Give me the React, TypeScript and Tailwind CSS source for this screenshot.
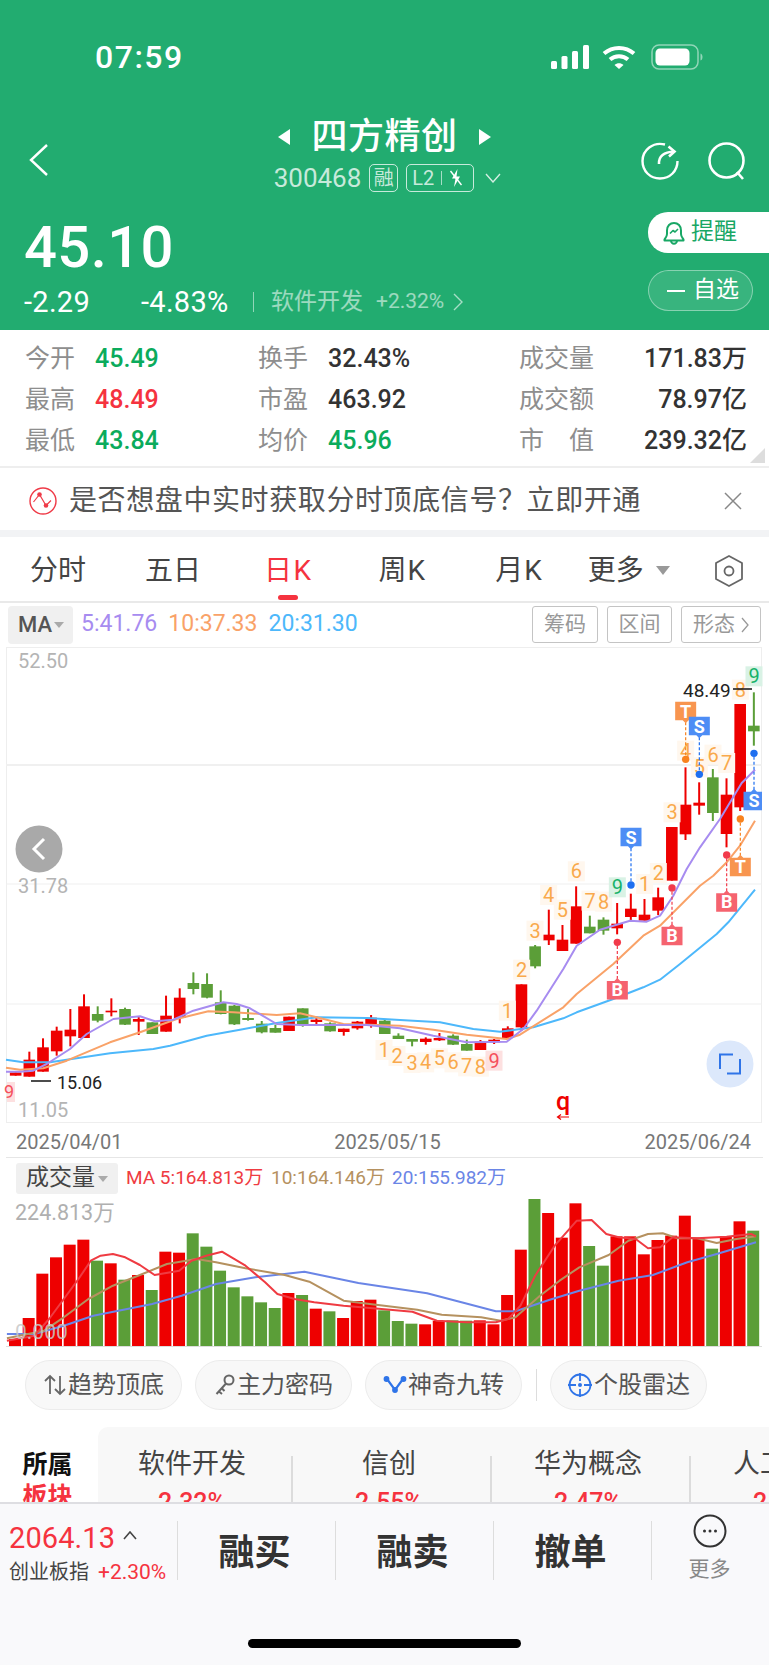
import type { ReactNode } from "react";

const RED = "#ee0000";
const GREEN = "#5b9e38";

// [bodyTop, bodyBottom, wickTop, wickBottom, up], measured on a 3x crop of the chart
type Candle = [number, number, number, number, 0 | 1];
const candles: Candle[] = [
  [1300, 1310, 1300, 1310, 1], [1262, 1313, 1238, 1313, 1], [1225, 1298, 1198, 1298, 1], [1175, 1237, 1163, 1250, 1],
  [1172, 1192, 1110, 1222, 1], [1102, 1197, 1066, 1197, 1], [1125, 1145, 1102, 1150, 0], [1115, 1120, 1078, 1132, 1],
  [1110, 1157, 1106, 1158, 0], [1140, 1148, 1132, 1188, 1], [1150, 1185, 1150, 1185, 0], [1130, 1178, 1070, 1178, 1],
  [1076, 1137, 1048, 1153, 1], [1032, 1050, 1000, 1066, 0], [1035, 1076, 1003, 1078, 0], [1090, 1125, 1054, 1126, 0],
  [1100, 1156, 1098, 1158, 0], [1137, 1143, 1110, 1145, 0], [1154, 1180, 1146, 1183, 0], [1167, 1181, 1157, 1181, 0],
  [1133, 1176, 1133, 1176, 1], [1108, 1158, 1108, 1163, 0], [1142, 1149, 1132, 1155, 1], [1153, 1177, 1150, 1178, 0],
  [1169, 1179, 1169, 1190, 1], [1148, 1168, 1146, 1172, 1], [1136, 1155, 1128, 1166, 1], [1145, 1185, 1140, 1185, 0],
  [1190, 1200, 1183, 1200, 0], [1200, 1208, 1200, 1222, 0], [1199, 1209, 1195, 1217, 1], [1197, 1204, 1182, 1206, 1],
  [1190, 1217, 1186, 1218, 0], [1215, 1235, 1202, 1235, 0], [1208, 1233, 1203, 1233, 1], [1202, 1210, 1200, 1215, 1],
  [1168, 1197, 1162, 1200, 1], [1036, 1165, 1036, 1175, 1], [922, 982, 918, 988, 0], [887, 904, 812, 918, 1],
  [902, 936, 858, 936, 1], [802, 914, 742, 914, 1], [863, 883, 830, 883, 0], [842, 875, 835, 887, 0],
  [854, 868, 792, 886, 1], [809, 834, 764, 844, 1], [827, 845, 780, 845, 1], [775, 815, 746, 828, 1],
  [564, 725, 564, 725, 1], [497, 586, 385, 603, 1], [491, 500, 430, 527, 1], [415, 522, 390, 546, 0],
  [467, 585, 418, 625, 1], [195, 505, 195, 516, 1], [260, 277, 160, 320, 0],
];

const pts = (left: number[][], right: number[][]) =>
  [
    ...left.map(([u, v]) => `${(u / 3).toFixed(1)},${(640 + v / 3).toFixed(1)}`),
    ...right.map(([u, v]) => `${(400 + u / 3).toFixed(1)},${(640 + v / 3).toFixed(1)}`),
  ].join(" ");

const ma5 = pts(
  [[18, 1298], [60, 1298], [100, 1295], [140, 1275], [210, 1230], [260, 1185], [340, 1140], [420, 1132], [465, 1147], [520, 1142], [580, 1115], [670, 1090], [710, 1095], [750, 1108], [830, 1155], [900, 1158], [1000, 1158], [1100, 1158]],
  [[0, 1168], [100, 1190], [200, 1210], [320, 1208], [370, 1170], [410, 1115], [490, 990], [530, 920], [600, 872], [690, 845], [740, 848], [780, 830], [820, 770], [860, 690], [900, 625], [960, 540], [1025, 432], [1065, 392]]
);
const ma10 = pts(
  [[18, 1286], [60, 1292], [130, 1288], [200, 1265], [330, 1210], [420, 1180], [530, 1140], [625, 1117], [700, 1120], [830, 1128], [900, 1123], [950, 1135], [1030, 1155]],
  [[0, 1160], [100, 1172], [200, 1187], [320, 1200], [360, 1187], [490, 1105], [530, 1065], [640, 975], [730, 890], [780, 860], [840, 800], [900, 740], [940, 710], [980, 670], [1020, 620], [1065, 545]]
);
const ma20 = pts(
  [[18, 1262], [70, 1270], [150, 1270], [330, 1243], [460, 1230], [510, 1220], [620, 1190], [720, 1172], [830, 1152], [950, 1135], [1100, 1137]],
  [[0, 1143], [120, 1150], [220, 1170], [300, 1178], [400, 1165], [490, 1138], [530, 1120], [640, 1080], [730, 1045], [780, 1022], [840, 975], [950, 885], [985, 850], [1065, 752]]
);

// [x, y, digit, tone], already in page pixels
const counts: [number, number, string, "o" | "g" | "r"][] = [
  [384, 1051, "1", "o"], [397, 1057, "2", "o"],
  ...([
    [36, 1272, "3", "o"], [77, 1270, "4", "o"], [118, 1258, "5", "o"], [159, 1270, "6", "o"], [200, 1282, "7", "o"], [241, 1283, "8", "o"], [282, 1265, "9", "r"],
    [322, 1115, "1", "o"], [365, 992, "2", "o"], [405, 875, "3", "o"], [446, 768, "4", "o"], [487, 812, "5", "o"], [529, 697, "6", "o"], [570, 785, "7", "o"], [611, 788, "8", "o"], [652, 745, "9", "g"],
    [734, 735, "1", "o"], [775, 702, "2", "o"], [816, 520, "3", "o"], [857, 335, "4", "o"], [898, 385, "5", "o"], [939, 347, "6", "o"], [980, 372, "7", "o"], [1021, 152, "8", "o"], [1062, 112, "9", "g"],
  ] as [number, number, string, "o" | "g" | "r"][]).map(
    ([u, v, d, t]) => [400 + u / 3, 640 + v / 3, d, t] as [number, number, string, "o" | "g" | "r"]
  ),
];

// [u, v of tag centre, v of dot, letter]
const tags: [number, number, number, string][] = [
  [693, 598, 738, "S"], [652, 1050, 910, "B"], [816, 887, 747, "B"], [980, 787, 648, "B"],
  [857, 220, 361, "T"], [898, 265, 406, "S"], [1021, 680, 540, "T"], [1062, 482, 343, "S"],
];
const tagColor: Record<string, string> = { S: "#4d8df5", B: "#f5636f", T: "#f8954f" };
const dotColor: Record<string, string> = { S: "#1e6ff0", B: "#f23a4a", T: "#f8821e" };

function PriceChart() {
  return (
    <svg width="769" height="477" viewBox="0 648 769 477" className="block" fontFamily="Roboto, sans-serif">
      <rect x="6.5" y="648.5" width="755" height="475" fill="none" stroke="#eeeeee" />
      <line x1="6" x2="762" y1="766" y2="766" stroke="#f0f0f0" strokeWidth="2" />
      <line x1="6" x2="762" y1="885" y2="885" stroke="#efefef" />
      <line x1="6" x2="762" y1="1005" y2="1005" stroke="#efefef" />

      <text x="18" y="669" fontSize="20" fill="#b4b4b4">52.50</text>
      <text x="18" y="894" fontSize="20" fill="#b4b4b4">31.78</text>
      <text x="18" y="1118" fontSize="20" fill="#b4b4b4">11.05</text>

      {candles.map(([top, bottom, wickTop, wickBottom, up], i) => {
        const x = 15.67 + 13.67 * i;
        const color = up ? RED : GREEN;
        return (
          <g key={i}>
            <rect x={x - 1} y={640 + wickTop / 3} width="2" height={(wickBottom - wickTop) / 3} fill={color} />
            <rect x={x - 5.8} y={640 + top / 3} width="11.6" height={(bottom - top) / 3} fill={color} />
          </g>
        );
      })}

      <polyline points={ma20} fill="none" stroke="#4db8fb" strokeWidth="2" strokeLinejoin="round" />
      <polyline points={ma10} fill="none" stroke="#f9a268" strokeWidth="2" strokeLinejoin="round" />
      <polyline points={ma5} fill="none" stroke="#a78cf0" strokeWidth="2" strokeLinejoin="round" />

      <rect x="7" y="1083" width="8" height="20" fill="#fde0e0" />
      <text x="4" y="1099" fontSize="18" fill="#f5505c">9</text>

      {counts.map(([x, y, digit, tone], i) => {
        const bg = tone === "o" ? "#fff7ee" : tone === "g" ? "#d9f2e5" : "#fde0e0";
        const fg = tone === "o" ? "#f9a94b" : tone === "g" ? "#17b26a" : "#f5505c";
        return (
          <g key={i}>
            <rect x={x - 8.5} y={y - 10} width="17" height="20" fill={bg} />
            <text x={x} y={y + 7} fontSize="20" textAnchor="middle" fill={fg}>{digit}</text>
          </g>
        );
      })}

      {tags.map(([u, v, dot, letter], i) => {
        const x = 400 + u / 3;
        const y = 640 + v / 3;
        const dy = 640 + dot / 3;
        const down = dy > y;
        const color = tagColor[letter];
        const left = x - 10.5;
        const right = Math.min(x + 10.5, 762);
        return (
          <g key={i}>
            <line x1={x} x2={x} y1={y} y2={dy} stroke={dotColor[letter]} strokeWidth="1.2" strokeDasharray="3 2" />
            <circle cx={x} cy={dy} r="3.7" fill={dotColor[letter]} />
            {down ? (
              <polygon points={`${left},${y - 10.5} ${right},${y - 10.5} ${right},${y + 8} ${x + 3},${y + 8} ${x},${y + 11} ${x - 3},${y + 8} ${left},${y + 8}`} fill={color} />
            ) : (
              <polygon points={`${left},${y - 8} ${x - 3},${y - 8} ${x},${y - 11} ${x + 3},${y - 8} ${right},${y - 8} ${right},${y + 10.5} ${left},${y + 10.5}`} fill={color} />
            )}
            <text x={x} y={y + (down ? 5.5 : 7)} fontSize="18" fontWeight="700" textAnchor="middle" fill="#ffffff">{letter}</text>
          </g>
        );
      })}

      <text x="683" y="698" fontSize="19" fill="#222222">48.49</text>
      <line x1="733" x2="752" y1="690" y2="690" stroke="#111111" strokeWidth="1.5" />
      <text x="57" y="1090" fontSize="18" fill="#222222">15.06</text>
      <line x1="31" x2="51" y1="1082" y2="1082" stroke="#111111" strokeWidth="1.5" />

      <text x="563" y="1111" fontSize="25" fontWeight="500" textAnchor="middle" fill={RED}>q</text>
      <path d="M569 1118H558M561 1115.5L557.5 1118L561 1120.5" fill="none" stroke={RED} strokeWidth="1.2" />

      <circle cx="39" cy="850" r="23.5" fill="#a9a9a9" />
      <path d="M44 840L34 850L44 860" fill="none" stroke="#ffffff" strokeWidth="3" />

      <circle cx="730" cy="1065" r="23.5" fill="#dce8fb" />
      <path d="M720 1070V1055.5H733M740 1060V1074.500H727" fill="none" stroke="#2f74e8" strokeWidth="2" />
    </svg>
  );
}

// volume bars: [v of top, up]
const volumes: [number, 0 | 1][] = [
  [570, 1], [507, 1], [374, 1], [325, 1], [287, 1], [272, 1], [335, 0], [343, 1], [392, 0], [378, 1], [423, 0],
  [308, 1], [311, 1], [253, 0], [293, 0], [365, 0], [415, 0], [442, 0], [460, 0], [477, 0], [432, 1], [438, 0],
  [479, 1], [487, 0], [507, 1], [456, 1], [452, 1], [484, 0], [516, 0], [524, 0], [526, 1], [516, 1], [514, 0],
  [515, 0], [514, 1], [526, 1], [438, 1], [302, 1], [140, 0], [192, 1], [266, 1], [163, 1], [291, 0], [350, 0],
  [262, 1], [262, 1], [316, 1], [273, 1], [260, 1], [200, 1], [266, 1], [299, 0], [262, 1], [217, 1], [245, 0],
];

const volPts = (p: number[][]) => p.map(([u, v]) => `${(u / 2.037).toFixed(1)},${(1150 + v / 3).toFixed(1)}`).join(" ");

const volMa5 = volPts([[14, 575], [70, 560], [100, 510], [130, 450], [160, 390], [185, 335], [205, 320], [230, 315], [255, 325], [285, 348], [315, 378], [365, 365], [390, 335], [420, 320], [452, 308], [500, 350], [540, 400], [565, 435], [600, 450], [640, 460], [700, 470], [760, 478], [840, 488], [890, 515], [950, 520], [1010, 520], [1035, 510], [1060, 470], [1090, 380], [1130, 290], [1175, 215], [1205, 213], [1235, 255], [1260, 265], [1295, 270], [1320, 298], [1345, 295], [1370, 265], [1420, 268], [1480, 263], [1530, 255], [1540, 262]]);
const volMa10 = volPts([[14, 568], [90, 545], [130, 505], [180, 450], [230, 410], [290, 375], [340, 345], [400, 330], [440, 340], [500, 358], [580, 378], [630, 398], [700, 455], [770, 468], [850, 482], [900, 497], [980, 505], [1020, 515], [1050, 505], [1100, 440], [1140, 395], [1180, 355], [1240, 318], [1280, 275], [1320, 255], [1350, 253], [1380, 268], [1420, 268], [1460, 282], [1500, 270], [1540, 262]]);
const volMa20 = volPts([[14, 555], [70, 555], [130, 530], [190, 500], [310, 465], [370, 440], [440, 405], [520, 385], [620, 368], [730, 402], [870, 433], [940, 460], [1010, 487], [1050, 487], [1120, 452], [1180, 425], [1260, 395], [1330, 378], [1400, 340], [1460, 315], [1540, 280]]);

function VolumeChart() {
  return (
    <svg width="769" height="148" viewBox="0 1200 769 148" className="block" fontFamily="Roboto, 'Noto Sans CJK SC', sans-serif">
      <line x1="6" x2="762" y1="1347.500" y2="1347.500" stroke="#dddddd" />
      {volumes.map(([top, up], i) => (
        <rect key={i} x={9 + 13.67 * i} y={1150 + top / 3} width="12" height={1347 - (1150 + top / 3)} fill={up ? RED : GREEN} />
      ))}
      <polyline points={volMa20} fill="none" stroke="#6a85e6" strokeWidth="2" strokeLinejoin="round" />
      <polyline points={volMa10} fill="none" stroke="#b5915f" strokeWidth="2" strokeLinejoin="round" />
      <polyline points={volMa5} fill="none" stroke="#ef3b42" strokeWidth="2" strokeLinejoin="round" />
      <text x="15" y="1221" fontSize="21.500" fill="#b0b0b0">224.813万</text>
      <text x="15" y="1340" fontSize="21" fill="#c8c8c8" fillOpacity="0.85">0.000</text>
    </svg>
  );
}

function Signal() {
  return (
    <svg width="38" height="24" viewBox="0 0 38 24" fill="#ffffff">
      <rect x="0" y="16" width="6" height="8" rx="1.5" />
      <rect x="10.500" y="11" width="6" height="13" rx="1.5" />
      <rect x="21" y="6" width="6" height="18" rx="1.5" />
      <rect x="32" y="0" width="6" height="24" rx="1.5" />
    </svg>
  );
}

function Wifi() {
  return (
    <svg width="34" height="24" viewBox="0 0 34 24" fill="none" stroke="#ffffff" strokeWidth="4">
      <path d="M2 8.500C10.500 1 23.500 1 32 8.500" />
      <path d="M8 14.500C13 10 21 10 26 14.500" />
      <path d="M12.500 20L17 24L21.500 20C19 17.500 15 17.500 12.500 20Z" fill="#ffffff" stroke="none" />
    </svg>
  );
}

function Battery() {
  return (
    <svg width="52" height="26" viewBox="0 0 52 26">
      <rect x="1" y="1" width="46" height="24" rx="7" fill="none" stroke="#ffffff" strokeOpacity="0.5" strokeWidth="1.5" />
      <rect x="4.500" y="4.500" width="34" height="17" rx="4.500" fill="#ffffff" />
      <path d="M49.500 9.500C51 10 51.500 11.500 51.500 13C51.500 14.500 51 16 49.500 16.500Z" fill="#ffffff" fillOpacity="0.5" />
    </svg>
  );
}

function Bell() {
  return (
    <svg width="22" height="24" viewBox="0 0 22 24" fill="none" stroke="#18a765" strokeWidth="2" strokeLinejoin="round">
      <path d="M4 13V9.500C4 5 7 2 11 2C15 2 18 5 18 9.500V13C18 15.500 19.500 17 20.500 18.500V19.500H1.500V18.500C2.500 17 4 15.500 4 13Z" />
      <path d="M8 19.500C8 21.500 9.500 22.800 11 22.800C12.500 22.800 14 21.500 14 19.500" />
      <path d="M7 12.500L10 9.500L12 11L15 8" strokeWidth="1.6" />
    </svg>
  );
}

function Pill({ icon, label }: { icon: ReactNode; label: string }) {
  return (
    <div className="flex h-[50px] w-[157px] items-center justify-center gap-[1px] rounded-full border border-[#ececec] bg-[#f8f8f8] text-[24px] text-[#555555]">
      {icon}
      <span>{label}</span>
    </div>
  );
}

function Stat({ label, value, color, wide }: { label: ReactNode; value: string; color: string; wide?: boolean }) {
  return (
    <div className={wide ? "flex h-[41px] items-center justify-between" : "flex h-[41px] items-center gap-[20px]"}>
      <span className={wide ? "flex w-[75px] justify-between text-[25px] text-[#8e8e8e]" : "text-[25px] text-[#8e8e8e]"}>{label}</span>
      <span className={`text-[25px] font-medium ${color}`}>{value}</span>
    </div>
  );
}

function Theme({ name, value, width }: { name: string; value: string; width: string }) {
  return (
    <div className={`flex shrink-0 flex-col items-center pr-[5px] ${width}`}>
      <span className="text-[27px] leading-[34px] text-[#444444]">{name}</span>
      <span className="mt-[7px] text-[25px] font-medium leading-[30px] text-[#f5333f]">{value}</span>
    </div>
  );
}

export default function App() {
  return (
    <div className="flex h-[1665px] w-[769px] flex-col overflow-hidden bg-white font-['Roboto','Noto_Sans_CJK_SC',sans-serif]">
      <header className="h-[330px] shrink-0 bg-[#22ac70] text-white">
        <div className="flex h-[110px] items-start justify-between pl-[95px] pr-[66px] pt-[37px]">
          <span className="text-[32px] font-medium leading-[40px] tracking-[1.5px]">07:59</span>
          <div className="flex items-center gap-[15px] pt-[7px]">
            <div className="-mr-[2px]">
              <Signal />
            </div>
            <Wifi />
            <Battery />
          </div>
        </div>

        <div className="flex h-[96px] items-start">
          <div className="flex-1 pl-[29px] pt-[34px]">
            <svg width="20" height="32" viewBox="0 0 20 32" fill="none" stroke="#ffffff" strokeWidth="2.4">
              <path d="M18 1L2 16L18 31" />
            </svg>
          </div>
          <div className="flex flex-col items-center">
            <div className="flex h-[54px] items-center gap-[21px] pr-[6px]">
              <span className="h-0 w-0 border-y-[8px] border-r-[12px] border-y-transparent border-r-white" />
              <span className="text-[36px] font-medium leading-[46px] tracking-[0.5px]">四方精创</span>
              <span className="h-0 w-0 border-y-[8px] border-l-[12px] border-y-transparent border-l-white" />
            </div>
            <div className="flex h-[28px] items-center text-white/75">
              <span className="text-[26px]">300468</span>
              <span className="ml-[8px] flex h-[28px] w-[29px] items-center justify-center rounded-[5px] border border-white/75 text-[20px]">融</span>
              <span className="ml-[8px] flex h-[28px] w-[68px] items-center rounded-[5px] border border-white/75 pl-[5px] text-[20px]">
                L2
                <span className="mx-[7px] h-[14px] w-px bg-white/60" />
                <svg width="14" height="20" viewBox="0 0 14 20" fill="#ffffff">
                  <path d="M8.500 1L3 10.500H6.500L5 19L11 8.500H7.500Z" />
                  <path d="M1.500 3L12.500 17" stroke="#ffffff" strokeWidth="1.4" fill="none" />
                </svg>
              </span>
              <svg className="ml-[11px]" width="16" height="10" viewBox="0 0 16 10" fill="none" stroke="#ffffff" strokeOpacity="0.8" strokeWidth="1.4">
                <path d="M1 1L8 9L15 1" />
              </svg>
            </div>
          </div>
          <div className="flex flex-1 justify-end gap-[29px] pr-[23px] pt-[32px]">
            <svg width="38" height="38" viewBox="0 0 38 38" fill="none" stroke="#ffffff" strokeWidth="2.4">
              <path d="M24 2.500C12 -0.500 1.500 8 1.500 19C1.500 29 9 36.500 19 36.500C29 36.500 36.500 29 36.500 19" />
              <path d="M18 22C17.500 14 23 10 33 9.500" strokeWidth="2.6" />
              <path d="M27.500 4.500L33.500 9.500L28 14.500" strokeWidth="2.6" />
            </svg>
            <svg width="38" height="39" viewBox="0 0 38 39" fill="none" stroke="#ffffff" strokeWidth="2.6">
              <circle cx="18.500" cy="18.500" r="17" />
              <path d="M29 30L35 37" />
            </svg>
          </div>
        </div>

        <div className="flex items-start justify-between pl-[24px] pt-[6px]">
          <div className="flex flex-col">
            <span className="text-[58px] font-medium leading-[70px] tracking-[0.4px]">45.10</span>
            <div className="mt-[3px] flex h-[34px] items-center">
              <span className="w-[117px] text-[29px] leading-[34px] tracking-[0.3px]">-2.29</span>
              <span className="w-[112px] text-[29px] leading-[34px] tracking-[0.3px]">-4.83%</span>
              <span className="h-[20px] w-px bg-white/50" />
              <span className="ml-[17px] text-[23px] text-white/55">软件开发</span>
              <span className="ml-[13px] text-[21px] text-white/55">+2.32%</span>
              <svg className="ml-[9px]" width="10" height="18" viewBox="0 0 10 18" fill="none" stroke="#ffffff" strokeOpacity="0.6" strokeWidth="1.4">
                <path d="M1 1L9 9L1 17" />
              </svg>
            </div>
          </div>
          <div className="flex w-[121px] flex-col gap-[17px]">
            <div className="flex h-[41px] items-center gap-[6px] rounded-l-[20px] bg-white pl-[15px] text-[23px] text-[#18a765]">
              <Bell />
              <span>提醒</span>
            </div>
            <div className="flex h-[41px] w-[105px] items-center rounded-full border border-white/40 bg-white/10 pl-[18px] text-[23px]">
              <span className="mr-[8px] h-[2px] w-[18px] bg-white" />
              <span>自选</span>
            </div>
          </div>
        </div>
      </header>

      <section className="relative grid h-[138px] shrink-0 grid-cols-[233px_261px_1fr] border-b-2 border-[#eeeeee] pl-[25px] pr-[22px] pt-[8px]">
        <div>
          <Stat label="今开" value="45.49" color="text-[#0bab5c]" />
          <Stat label="最高" value="48.49" color="text-[#f5333f]" />
          <Stat label="最低" value="43.84" color="text-[#0bab5c]" />
        </div>
        <div>
          <Stat label="换手" value="32.43%" color="text-[#333333]" />
          <Stat label="市盈" value="463.92" color="text-[#333333]" />
          <Stat label="均价" value="45.96" color="text-[#0bab5c]" />
        </div>
        <div>
          <Stat wide label="成交量" value="171.83万" color="text-[#333333]" />
          <Stat wide label="成交额" value="78.97亿" color="text-[#333333]" />
          <Stat wide label={<><span>市</span><span>值</span></>} value="239.32亿" color="text-[#333333]" />
        </div>
        <span className="absolute bottom-[3px] right-[4px] h-0 w-0 border-b-[15px] border-l-[15px] border-b-[#dddddd] border-l-transparent" />
      </section>

      <div className="flex h-[62px] shrink-0 items-center pl-[29px] pr-[27px] pt-[3px]">
        <svg width="28" height="28" viewBox="0 0 28 28" fill="none" stroke="#ef3b48" strokeWidth="1.4">
          <circle cx="14" cy="14" r="13" />
          <path d="M4.500 15L10.500 7.500L17 18.500L22 13.500" strokeWidth="1.2" />
          <circle cx="10.500" cy="7.500" r="2.300" fill="#ef3b48" stroke="none" />
          <circle cx="17" cy="18.500" r="2.300" fill="#ef3b48" stroke="none" />
        </svg>
        <span className="ml-[12px] flex-1 text-[28px] leading-[36px] tracking-[0.6px] text-[#555555]">是否想盘中实时获取分时顶底信号？立即开通</span>
        <svg width="18" height="18" viewBox="0 0 18 18" fill="none" stroke="#888888" strokeWidth="1.5">
          <path d="M1 1L17 17M17 1L1 17" />
        </svg>
      </div>

      <div className="h-[7px] shrink-0 bg-[#f2f3f5]" />

      <nav className="relative flex h-[66px] shrink-0 items-center border-b-2 border-[#e9e9e9] pt-[3px] text-[28px] text-[#444444]">
        <span className="ml-[30px]">分时</span>
        <span className="ml-[59px]">五日</span>
        <span className="ml-[63px] tracking-[1.5px] text-[#f5333f]">日K</span>
        <span className="ml-[66px] tracking-[1px]">周K</span>
        <span className="ml-[69px] tracking-[1px]">月K</span>
        <span className="ml-[45px]">更多</span>
        <span className="ml-[12px] h-0 w-0 border-x-[7px] border-t-[9px] border-x-transparent border-t-[#999999]" />
        <svg className="ml-[45px]" width="28" height="32" viewBox="0 0 28 32" fill="none" stroke="#666666" strokeWidth="1.8">
          <path d="M14 1L27 8V24L14 31L1 24V8Z" strokeLinejoin="round" />
          <circle cx="14" cy="16" r="4.500" />
        </svg>
        <span className="absolute bottom-[1px] left-[278px] h-[5px] w-[20px] rounded-full bg-[#f5333f]" />
      </nav>

      <div className="flex h-[43px] shrink-0 items-center pl-[8px] pr-[8px]">
        <div className="flex h-[38px] w-[65px] items-center rounded-[4px] bg-[#f0f0f0] pl-[10px] text-[22px] font-medium text-[#555555]">
          MA
          <span className="ml-[2px] h-0 w-0 border-x-[5px] border-t-[6px] border-x-transparent border-t-[#aaaaaa]" />
        </div>
        <span className="ml-[8px] text-[23px] text-[#a78cf0]">5:41.76</span>
        <span className="ml-[11px] text-[23px] text-[#f9a268]">10:37.33</span>
        <span className="ml-[11px] text-[23px] text-[#4db8fb]">20:31.30</span>
        <div className="ml-auto flex gap-[9px] text-[21px] text-[#999999]">
          <span className="flex h-[37px] w-[66px] items-center justify-center rounded-[3px] border border-[#c4c4c4]">筹码</span>
          <span className="flex h-[37px] w-[65px] items-center justify-center rounded-[3px] border border-[#c4c4c4]">区间</span>
          <span className="flex h-[37px] w-[80px] items-center justify-center gap-[6px] rounded-[3px] border border-[#c4c4c4]">
            形态
            <svg width="8" height="16" viewBox="0 0 8 16" fill="none" stroke="#999999" strokeWidth="1.3">
              <path d="M1 1L7 8L1 15" />
            </svg>
          </span>
        </div>
      </div>

      <div className="mt-[1px] shrink-0">
        <PriceChart />
      </div>

      <div className="flex h-[33px] shrink-0 items-center justify-between pl-[16px] pr-[18px] pt-[3px] text-[20px] text-[#777777]">
        <span>2025/04/01</span>
        <span className="ml-[8px]">2025/05/15</span>
        <span>2025/06/24</span>
      </div>

      <div className="mx-[6px] flex h-[42px] shrink-0 items-start border-t border-[#e6e6e6] pl-[10px] pt-[5px]">
        <div className="flex h-[31px] w-[102px] items-center justify-center gap-[3px] rounded-[3px] bg-[#f0f0f0] text-[23px] text-[#444444]">
          成交量
          <span className="h-0 w-0 border-x-[5px] border-t-[6px] border-x-transparent border-t-[#aaaaaa]" />
        </div>
        <div className="flex h-[31px] items-center text-[19px]">
          <span className="ml-[8px] w-[145px] text-[#ef3b42]">MA 5:164.813万</span>
          <span className="w-[121px] text-[#b5915f]">10:164.146万</span>
          <span className="text-[#6a85e6]">20:155.982万</span>
        </div>
      </div>

      <div className="shrink-0">
        <VolumeChart />
      </div>

      <div className="mt-[13px] flex shrink-0 items-center pl-[25px]">
        <Pill
          label="趋势顶底"
          icon={
            <svg width="24" height="22" viewBox="0 0 24 22" fill="none" stroke="#666666" strokeWidth="1.8">
              <path d="M7 20V2M2 7L7 2L12 7M17 2V20M12 15L17 20L22 15" />
            </svg>
          }
        />
        <div className="ml-[13px]">
          <Pill
            label="主力密码"
            icon={
              <svg width="22" height="24" viewBox="0 0 22 24" fill="none" stroke="#666666" strokeWidth="2">
                <circle cx="15" cy="7" r="4.500" />
                <path d="M12 10.500L2.500 21M5 18.500L8 21M8 15.500L10.500 18" />
              </svg>
            }
          />
        </div>
        <div className="ml-[13px]">
          <Pill
            label="神奇九转"
            icon={
              <svg width="24" height="20" viewBox="0 0 24 20" fill="#2f74e8" stroke="#2f74e8" strokeWidth="2.2">
                <path d="M4 4L12 15L20 4" fill="none" />
                <circle cx="3.500" cy="4" r="1.800" />
                <circle cx="20.500" cy="4" r="1.800" />
                <circle cx="12" cy="15" r="1.800" />
              </svg>
            }
          />
        </div>
        <span className="ml-[14px] h-[32px] w-px bg-[#dddddd]" />
        <div className="ml-[13px]">
          <Pill
            label="个股雷达"
            icon={
              <svg width="26" height="26" viewBox="0 0 26 26" fill="none" stroke="#2f74e8" strokeWidth="1.8">
                <circle cx="13" cy="13" r="10.500" />
                <path d="M13 1V9M13 17V25M1 13H9M17 13H25" />
                <circle cx="13" cy="13" r="2" fill="#2f74e8" stroke="none" />
              </svg>
            }
          />
        </div>
      </div>

      <div className="mt-[17px] flex h-[75px] shrink-0 overflow-hidden">
        <div className="flex w-[98px] shrink-0 flex-col items-center pr-[3px] pt-[22px] text-[25px] font-bold leading-[32px]">
          <span className="text-[#111111]">所属</span>
          <span className="text-[#f5333f]">板块</span>
        </div>
        <div className="flex min-w-0 flex-1 overflow-hidden rounded-tl-[10px] bg-[#f8f8f8] pt-[20px]">
          <Theme name="软件开发" value="2.32%" width="w-[193px]" />
          <span className="mt-[9px] h-[50px] w-[2px] shrink-0 bg-[#dcdcdc]" />
          <Theme name="信创" value="2.55%" width="w-[197px]" />
          <span className="mt-[9px] h-[50px] w-[2px] shrink-0 bg-[#dcdcdc]" />
          <Theme name="华为概念" value="2.47%" width="w-[197px]" />
          <span className="mt-[9px] h-[50px] w-[2px] shrink-0 bg-[#dcdcdc]" />
          <Theme name="人工智能" value="2.10%" width="w-[197px]" />
        </div>
      </div>

      <footer className="flex flex-1 flex-col border-t-2 border-[#dedee2] bg-[#f9f9fb]">
        <div className="mt-[17px] flex h-[59px] items-stretch">
          <div className="flex w-[177px] flex-col pl-[9px]">
            <div className="flex h-[36px] items-center">
              <span className="text-[29px] leading-[34px] tracking-[0.1px] text-[#f5333f]">2064.13</span>
              <svg className="mb-[6px] ml-[8px]" width="14" height="9" viewBox="0 0 14 9" fill="none" stroke="#444444" strokeWidth="1.6">
                <path d="M1 8L7 1L13 8" />
              </svg>
            </div>
            <div className="mt-[5px] flex items-center">
              <span className="text-[20px] leading-[24px] text-[#444444]">创业板指</span>
              <span className="ml-[9px] text-[21px] leading-[24px] text-[#f5333f]">+2.30%</span>
            </div>
          </div>
          <span className="w-px bg-[#dddddd]" />
          <div className="flex w-[157px] items-center justify-center pr-[4px] pt-[4px] text-[36px] font-bold text-[#333333]">融买</div>
          <span className="w-px bg-[#dddddd]" />
          <div className="flex w-[157px] items-center justify-center pr-[4px] pt-[4px] text-[36px] font-bold text-[#333333]">融卖</div>
          <span className="w-px bg-[#dddddd]" />
          <div className="flex w-[157px] items-center justify-center pr-[4px] pt-[4px] text-[36px] font-bold text-[#333333]">撤单</div>
          <span className="w-px bg-[#dddddd]" />
          <div className="flex flex-1 flex-col items-center pr-[2px]">
            <svg className="-mt-[7px] shrink-0" width="34" height="34" viewBox="0 0 34 34" fill="#333333">
              <circle cx="17" cy="17" r="15.500" fill="none" stroke="#333333" strokeWidth="2" />
              <circle cx="11.500" cy="17" r="1.500" />
              <circle cx="17" cy="17" r="1.500" />
              <circle cx="22.500" cy="17" r="1.500" />
            </svg>
            <span className="mt-[8px] text-[21px] leading-[26px] text-[#888888]">更多</span>
          </div>
        </div>
        <div className="mb-[17px] mt-auto flex justify-center">
          <span className="h-[9px] w-[273px] rounded-full bg-black" />
        </div>
      </footer>
    </div>
  );
}
